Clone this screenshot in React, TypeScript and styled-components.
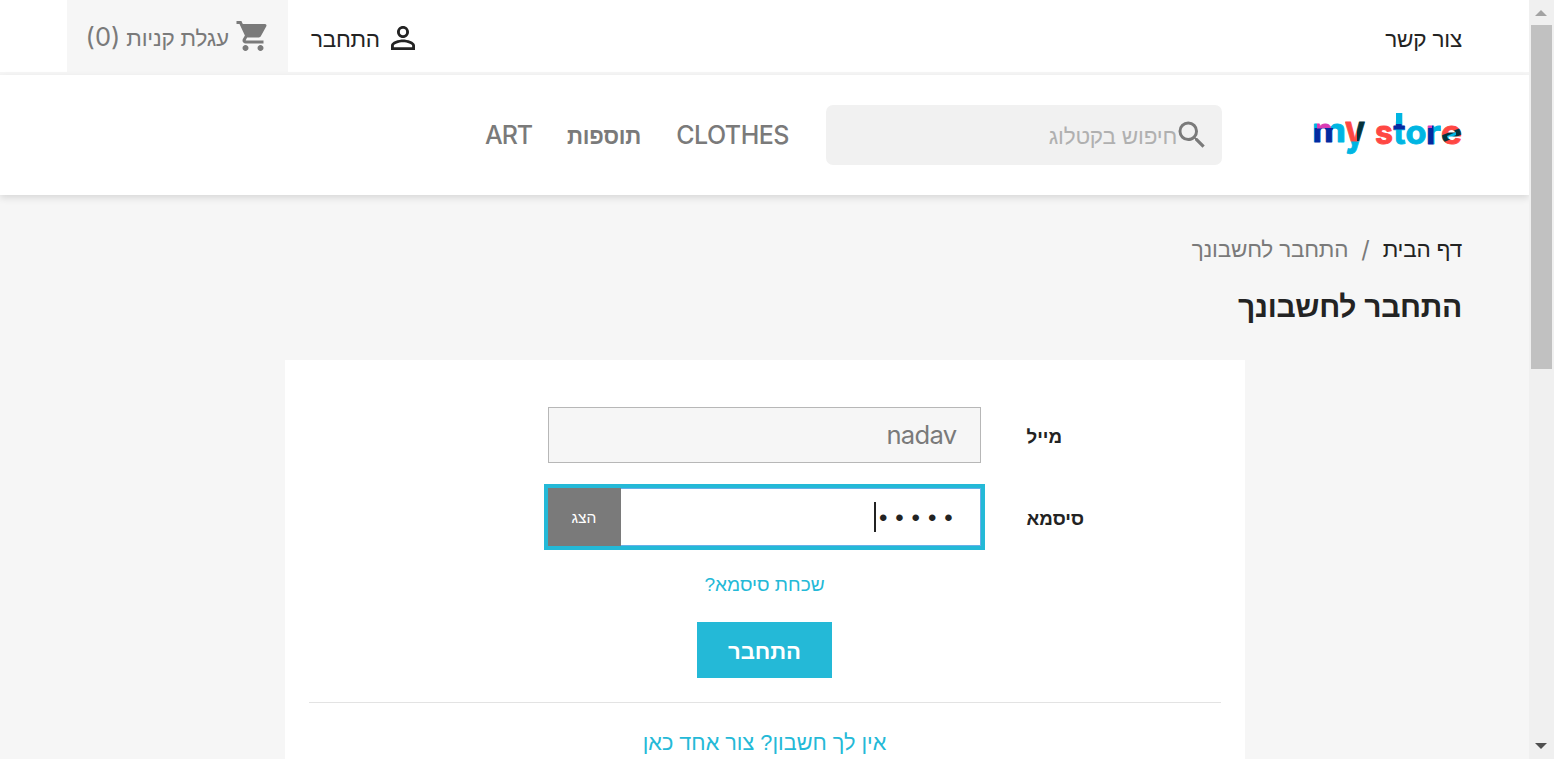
import React from 'react';
import styled, { createGlobalStyle } from 'styled-components';
import { MdPersonOutline, MdSearch, MdShoppingCart } from 'react-icons/md';

const hebrew = '"Liberation Sans", Arial, sans-serif';
const latin = 'Inter, "Liberation Sans", sans-serif';

const GlobalStyle = createGlobalStyle`
  * { box-sizing: border-box; }
  body { margin: 0; overflow: hidden; background: #f6f6f6; font-family: ${hebrew}; color: #232323; }
`;

const Window = styled.div`
  display: flex;
  width: 1554px;
  height: 759px;
  overflow: hidden;
`;

const Page = styled.div`
  direction: rtl;
  width: 1529px;
  height: 759px;
  overflow: hidden;
  background: #f6f6f6;
`;

const Text = styled.span<{ $size: number; $color?: string; $weight?: number; $spacing?: number; $latin?: boolean }>`
  font-family: ${p => (p.$latin ? latin : hebrew)};
  font-size: ${p => p.$size}px;
  font-weight: ${p => p.$weight ?? 400};
  color: ${p => p.$color ?? '#232323'};
  letter-spacing: ${p => p.$spacing ?? 0}px;
  line-height: 30px;
  white-space: nowrap;
`;

const TopBar = styled.nav`
  display: flex;
  align-items: flex-start;
  height: 75px;
  padding: 0 67px;
  background: #fff;
  border-bottom: 3px solid #f6f6f6;
`;

const Contact = styled.a`
  display: flex;
  padding-top: 25px;
  margin-left: auto;
`;

const UserLink = styled.a`
  display: flex;
  gap: 5px;
  padding-top: 20px;
  margin-left: 23px;
  svg { width: 36px; height: 36px; }
  span { margin-top: 5px; }
`;

const Cart = styled.a`
  display: flex;
  width: 221px;
  height: 72px;
  padding: 18px 17px 0 0;
  background: #f6f6f6;
  color: #7a7a7a;
  svg { width: 36px; height: 36px; margin-left: 6px; }
  span { margin-top: 6px; }
  span + span { margin: 4px 6px 0 0; }
`;

const Header = styled.header`
  position: relative;
  display: flex;
  height: 120px;
  padding: 30px 67px 0;
  background: #fff;
  box-shadow: 0 3px 7px rgba(0, 0, 0, 0.12);
`;

const Logo = styled.svg`
  width: 156px;
  height: 52px;
  margin: 4px -3px 0 87px;
  overflow: visible;
`;

const SearchBox = styled.div`
  display: flex;
  width: 396px;
  height: 60px;
  padding: 12px 12px 0;
  border-radius: 7px;
  background: #f1f1f1;
  color: #7a7a7a;
  svg { width: 36px; height: 36px; }
  span { margin: 5px -3px 0 0; }
`;

const Menu = styled.div`
  display: flex;
  gap: 35px;
  margin: 15px 37px 0 0;
  span:nth-child(2) { margin-top: 2px; }
`;

const Breadcrumb = styled.div`
  display: flex;
  padding: 40px 67px 0;
  span + span { margin-right: 13px; }
`;

const Title = styled.h1`
  display: flex;
  margin: 27px 67px 0;
  font-weight: 700;
`;

const Card = styled.main`
  display: flex;
  flex-direction: column;
  align-items: center;
  width: 960px;
  height: 500px;
  margin: 38px auto 0;
  padding: 47px 24px 0;
  background: #fff;
`;

const Row = styled.label<{ $gap: number }>`
  display: grid;
  grid-template-columns: 194px 433px;
  column-gap: 46px;
  align-items: center;
  align-self: flex-start;
  margin-top: ${p => p.$gap}px;
  > span { text-align: left; padding-top: 3px; }
`;

const Field = styled.div`
  display: flex;
  align-items: center;
  height: 56px;
  padding-right: 23px;
  border: 1px solid #b7b7b7;
  background: #f6f6f6;
`;

const PasswordGroup = styled.div`
  display: flex;
  height: 58px;
  outline: 4px solid #24b9d7;
`;

const PasswordField = styled.div`
  display: flex;
  flex: 1;
  align-items: center;
  padding: 1px 19px 0 0;
  border: 1px solid #66afe9;
  border-left-width: 0;
  background: #fff;
`;

const Caret = styled.i`
  width: 2px;
  height: 30px;
  margin: -1px 3px 0 0;
  background: #232323;
`;

const ShowButton = styled.button`
  width: 73px;
  border: 0;
  padding: 1px 0 0;
  background: #7a7a7a;
`;

const Forgot = styled.a`
  display: flex;
  margin-top: 24px;
`;

const Submit = styled.button`
  width: 135px;
  height: 56px;
  margin-top: 22px;
  padding: 4px 0 0;
  border: 0;
  background: #24b9d7;
`;

const Rule = styled.hr`
  width: 912px;
  height: 1px;
  margin: 24px 0 25px;
  border: 0;
  background: #e3e3e3;
`;

const ScrollTrack = styled.div`
  display: flex;
  flex-direction: column;
  align-items: center;
  width: 25px;
  height: 759px;
  padding: 10px 1px 10px 0;
  background: #f0f0f0;
`;

const Thumb = styled.div`
  width: 21px;
  height: 344px;
  margin: 9px 0 auto 1px;
  background: #c1c1c1;
`;

function StoreLogo() {
  return (
    <Logo viewBox="0 0 156 52" direction="ltr" aria-label="my store">
      <defs>
        <pattern id="ink" width="170" height="60" patternUnits="userSpaceOnUse">
          <rect width="170" height="60" fill="#00b5e2" />
          <rect x="5.5" y="19" width="7.5" height="20" fill="#0529a0" />
          <rect x="8" y="10" width="14" height="9.5" fill="#d93bb4" />
          <rect x="16" y="19" width="8" height="20" fill="#0529a0" />
          <rect x="36" y="10" width="13.5" height="22.5" fill="#ff4743" />
          <rect x="48" y="10" width="10" height="22" fill="#05323b" />
          <rect x="64" y="8" width="21" height="36" fill="#ff4743" />
          <rect x="84" y="15" width="14" height="5.5" fill="#0529a0" />
          <rect x="117" y="10" width="7.5" height="30" fill="#0529a0" />
          <rect x="117" y="10" width="6" height="9" fill="#d93bb4" />
          <rect x="132" y="8" width="24" height="36" fill="#ff4743" />
          <path d="M131 27L154 18V25L133 34Z" fill="#05323b" />
          <path d="M138 27L147 23V26L139 30Z" fill="#00b5e2" />
        </pattern>
      </defs>
      <rect x="87" y="4" width="6.3" height="13" fill="#00b5e2" />
      <g fill="url(#ink)" stroke="url(#ink)" strokeWidth="0.9" strokeLinejoin="round" fontFamily="Inter" fontWeight="700" fontSize="33">
        <text x="3" y="33" textLength="34" lengthAdjust="spacingAndGlyphs">m</text>
        <text x="36" y="36" fontSize="41" textLength="20" lengthAdjust="spacingAndGlyphs">y</text>
        <text x="66" y="34.5" textLength="18" lengthAdjust="spacingAndGlyphs">s</text>
        <text x="84.5" y="34.5" fontSize="33" textLength="12" lengthAdjust="spacingAndGlyphs">t</text>
        <text x="96.5" y="34.5" textLength="21" lengthAdjust="spacingAndGlyphs">o</text>
        <text x="117" y="35" textLength="15" lengthAdjust="spacingAndGlyphs">r</text>
        <text x="132" y="35" textLength="21" lengthAdjust="spacingAndGlyphs">e</text>
      </g>
    </Logo>
  );
}

export default function App() {
  return (
    <Window>
      <GlobalStyle />
      <Page>
        <TopBar>
          <Contact><Text $size={22.5} $spacing={-0.2}>צור קשר</Text></Contact>
          <UserLink><MdPersonOutline /><Text $size={22.5} $spacing={-0.3}>התחבר</Text></UserLink>
          <Cart>
            <MdShoppingCart />
            <Text $size={22.5} $spacing={-0.2} $color="#7a7a7a">עגלת קניות</Text>
            <Text $size={25.5} $latin $color="#7a7a7a">(0)</Text>
          </Cart>
        </TopBar>
        <Header>
          <StoreLogo />
          <SearchBox><MdSearch /><Text $size={22.5} $spacing={-0.2} $color="#b0b0b0">חיפוש בקטלוג</Text></SearchBox>
          <Menu>
            <Text $size={25} $latin $weight={550} $spacing={-0.5} $color="#7a7a7a">CLOTHES</Text>
            <Text $size={22.3} $weight={700} $spacing={-0.2} $color="#7a7a7a">תוספות</Text>
            <Text $size={25} $latin $weight={550} $spacing={-1.1} $color="#7a7a7a">ART</Text>
          </Menu>
        </Header>
        <Breadcrumb>
          <Text $size={22.5} $spacing={-0.2}>דף הבית</Text>
          <Text $size={23.4} $latin $color="#7a7a7a">/</Text>
          <Text $size={22.5} $spacing={-0.2} $color="#7a7a7a">התחבר לחשבונך</Text>
        </Breadcrumb>
        <Title><Text $size={30} $spacing={-0.3} $weight={700}>התחבר לחשבונך</Text></Title>
        <Card>
          <Row $gap={0}>
            <Text $size={18.7} $weight={700}>מייל</Text>
            <Field><Text $size={25.6} $latin $spacing={-0.7} $color="#7a7a7a">nadav</Text></Field>
          </Row>
          <Row $gap={25}>
            <Text $size={18.7} $weight={700}>סיסמא</Text>
            <PasswordGroup>
              <PasswordField>
                <Text $size={24} $spacing={7.9}>•••••</Text>
                <Caret />
              </PasswordField>
              <ShowButton><Text $size={15.6} $color="#fff">הצג</Text></ShowButton>
            </PasswordGroup>
          </Row>
          <Forgot><Text $size={19.1} $color="#24b9d7">שכחת סיסמא?</Text></Forgot>
          <Submit><Text $size={22.1} $weight={700} $color="#fff">התחבר</Text></Submit>
          <Rule />
          <Text $size={21.7} $color="#24b9d7">אין לך חשבון? צור אחד כאן</Text>
        </Card>
      </Page>
      <ScrollTrack>
        <svg width="12" height="6"><path d="M6 0L12 6H0Z" fill="#a3a3a3" /></svg>
        <Thumb />
        <svg width="12" height="6"><path d="M0 0H12L6 6Z" fill="#505050" /></svg>
      </ScrollTrack>
    </Window>
  );
}
